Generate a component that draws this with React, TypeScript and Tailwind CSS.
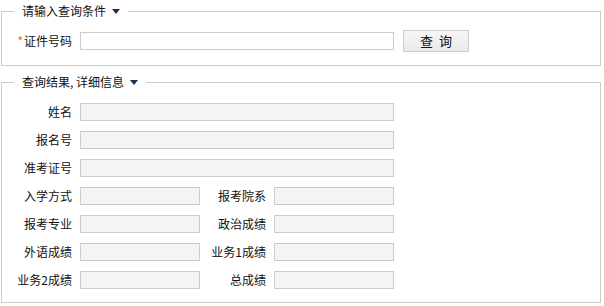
import React from "react";

const font = { fontFamily: '"Noto Sans CJK SC", "Noto Sans", sans-serif' };

function Tri() {
  return (
    <span className="inline-block ml-[6px] align-middle w-0 h-0 border-l-[4.5px] border-r-[4.5px] border-t-[5px] border-l-transparent border-r-transparent border-t-[#17324f] mb-[2px]" />
  );
}

function Field({ w }: { w: string }) {
  return <div className={`${w} h-[18px] border border-[#cccccc] bg-[#f4f4f4] shrink-0`} />;
}

function Row({ label, children }: { label: string; children?: React.ReactNode }) {
  return (
    <div className="flex items-center h-[28px]">
      <div className="w-[70px] text-right shrink-0 leading-[18px]">{label}</div>
      <div className="ml-[8px] flex items-center">{children}</div>
    </div>
  );
}

function Row2({ a, b }: { a: string; b: string }) {
  return (
    <div className="flex items-center h-[28px]">
      <div className="w-[70px] text-right shrink-0 leading-[18px]">{a}</div>
      <div className="ml-[8px]">
        <Field w="w-[120px]" />
      </div>
      <div className="w-[66px] text-right shrink-0 leading-[18px]">{b}</div>
      <div className="ml-[8px]">
        <Field w="w-[120px]" />
      </div>
    </div>
  );
}

export default function App() {
  return (
    <div className="w-[604px] h-[306px] bg-white pl-[1px] pr-[3px] text-[12px] text-[#111]" style={font}>
      <fieldset className="mt-[1px] border border-[#cccccc] px-0 pt-0 pb-[13px] m-0 min-w-0">
        <legend className="ml-[12px] px-[8px] leading-[20px]">
          请输入查询条件
          <Tri />
        </legend>
        <div className="flex items-center h-[22px] mt-[9px]">
          <div className="w-[70px] text-right shrink-0 leading-[18px]">
            <span className="text-[#ff6600] mr-[1px]">*</span>证件号码
          </div>
          <div className="ml-[8px] w-[314px] h-[18px] border border-[#cccccc] bg-white shrink-0" />
          <button className="ml-[9px] w-[66px] h-[22px] border border-[#cccccc] bg-gradient-to-b from-[#f7f7f7] to-[#e9e9e9] text-[13px] text-[#111] leading-[20px] tracking-[6px] pl-[6px]">
            查询
          </button>
        </div>
      </fieldset>
      <fieldset className="mt-[6px] border border-[#cccccc] px-0 pt-0 pb-[8px] m-0 min-w-0">
        <legend className="ml-[12px] px-[8px] leading-[20px]">
          查询结果, 详细信息
          <Tri />
        </legend>
        <div className="pt-[6px]">
          <Row label="姓名">
            <Field w="w-[314px]" />
          </Row>
          <Row label="报名号">
            <Field w="w-[314px]" />
          </Row>
          <Row label="准考证号">
            <Field w="w-[314px]" />
          </Row>
          <Row2 a="入学方式" b="报考院系" />
          <Row2 a="报考专业" b="政治成绩" />
          <Row2 a="外语成绩" b="业务1成绩" />
          <Row2 a="业务2成绩" b="总成绩" />
        </div>
      </fieldset>
    </div>
  );
}
